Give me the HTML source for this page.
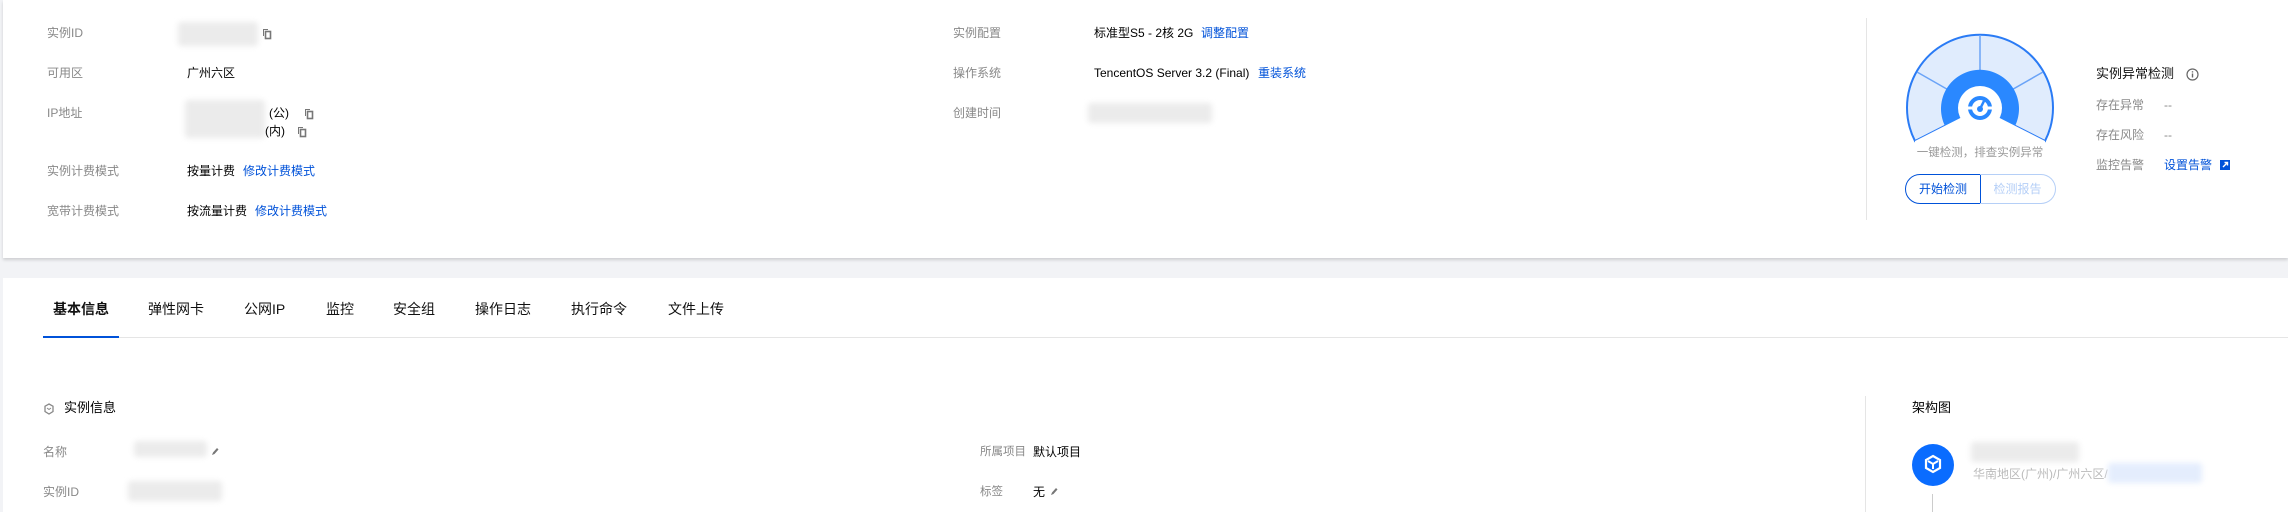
<!DOCTYPE html>
<html><head><meta charset="utf-8"><style>
*{margin:0;padding:0;box-sizing:border-box}
body{width:2288px;height:512px;overflow:hidden;background:#f2f3f6;font-family:"Liberation Sans","Noto Sans CJK SC",sans-serif;font-size:12px;color:#000;position:relative}
.a{position:absolute;white-space:nowrap;line-height:16px}
.card{position:absolute;background:#fff}
.l{color:#888}
.b{color:#0052d9}
.blur{position:absolute;background:#ebebeb;filter:blur(3px);border-radius:3px}
.tab{position:absolute;top:300px;font-size:14px;color:#111;line-height:18px}
</style></head><body>
<div class="card" style="left:3px;top:0;width:2285px;height:258px;box-shadow:0 2px 3px rgba(0,0,0,.15)"></div>
<div class="card" style="left:3px;top:278px;width:2285px;height:234px"></div>

<!-- col1 -->
<div class="a l" style="left:47px;top:25px">实例ID</div>
<div class="blur" style="left:178px;top:22px;width:80px;height:24px"></div>
<svg class="a" style="left:262px;top:28px" width="10" height="12" viewBox="0 0 10 12"><path d="M1 1h5v1H2v6H1z" fill="#777"/><rect x="3.5" y="3.5" width="5" height="7" fill="none" stroke="#777" stroke-width="1.6"/></svg>
<div class="a l" style="left:47px;top:65px">可用区</div>
<div class="a" style="left:187px;top:65px">广州六区</div>
<div class="a l" style="left:47px;top:105px">IP地址</div>
<div class="blur" style="left:185px;top:100px;width:80px;height:38px"></div>
<div class="a" style="left:269px;top:105px">(公)</div>
<svg class="a" style="left:304px;top:108px" width="10" height="12" viewBox="0 0 10 12"><path d="M1 1h5v1H2v6H1z" fill="#777"/><rect x="3.5" y="3.5" width="5" height="7" fill="none" stroke="#777" stroke-width="1.6"/></svg>
<div class="a" style="left:265px;top:123px">(内)</div>
<svg class="a" style="left:297px;top:126px" width="10" height="12" viewBox="0 0 10 12"><path d="M1 1h5v1H2v6H1z" fill="#777"/><rect x="3.5" y="3.5" width="5" height="7" fill="none" stroke="#777" stroke-width="1.6"/></svg>
<div class="a l" style="left:47px;top:163px">实例计费模式</div>
<div class="a" style="left:187px;top:163px">按量计费</div><div class="a b" style="left:243px;top:163px">修改计费模式</div>
<div class="a l" style="left:47px;top:203px">宽带计费模式</div>
<div class="a" style="left:187px;top:203px">按流量计费</div><div class="a b" style="left:255px;top:203px">修改计费模式</div>

<!-- col2 -->
<div class="a l" style="left:953px;top:25px">实例配置</div>
<div class="a" style="left:1094px;top:25px">标准型S5 - 2核 2G</div><div class="a b" style="left:1201px;top:25px">调整配置</div>
<div class="a l" style="left:953px;top:65px">操作系统</div>
<div class="a" style="left:1094px;top:65px">TencentOS Server 3.2 (Final)</div><div class="a b" style="left:1258px;top:65px">重装系统</div>
<div class="a l" style="left:953px;top:105px">创建时间</div>
<div class="blur" style="left:1088px;top:103px;width:124px;height:20px"></div>

<!-- right panel -->
<div style="position:absolute;left:1866px;top:18px;width:1px;height:202px;background:#e5e5e5"></div>
<svg class="a" style="left:1900px;top:30px" width="160" height="120" viewBox="1900 30 160 120">
<path d="M1980 108 L1915 141 A73 73 0 1 1 2045 141 Z" fill="#e0ecfd" stroke="#2a7bf5" stroke-width="2"/>
<path d="M1980 35V108M1917 72L1980 108M2043 72L1980 108" stroke="#6aa3f7" stroke-width="1.5"/>
<path d="M1980 108 L1945 126 A39 39 0 1 1 2015 126 Z" fill="#2a88ff"/>
<path d="M1915 141L1980 108L2045 141L2045 150L1915 150Z" fill="#fff"/>
<circle cx="1980" cy="108" r="22" fill="#fff"/>
<path d="M1970 108a10 10 0 1 1 20 0a10 10 0 0 1-20 0" fill="none" stroke="#2a88ff" stroke-width="4"/>
<path d="M1967 108h6M1987 108h6" stroke="#fff" stroke-width="3"/>
<circle cx="1980" cy="109" r="3" fill="#2a88ff"/><path d="M1980 109L1984 101" stroke="#2a88ff" stroke-width="2.5"/>
</svg>
<div class="a" style="left:1914px;top:145px;width:132px;text-align:center;color:#999;font-size:11.5px">一键检测，排查实例异常</div>
<div class="a" style="left:1905px;top:174px;width:76px;height:30px;border:1px solid #0052d9;border-radius:15px 0 0 15px;color:#0052d9;text-align:center;line-height:28px">开始检测</div>
<div class="a" style="left:1980px;top:174px;width:76px;height:30px;border:1px solid #b5cff7;border-left:none;border-radius:0 15px 15px 0;color:#b5cff7;text-align:center;line-height:28px">检测报告</div>
<div class="a" style="left:2096px;top:66px;font-size:13px;color:#111">实例异常检测</div>
<svg class="a" style="left:2186px;top:68px" width="13" height="13" viewBox="0 0 13 13"><circle cx="6.5" cy="6.5" r="5.5" fill="none" stroke="#666" stroke-width="1.2"/><path d="M6.5 5.5v4M6.5 3.3v1.2" stroke="#666" stroke-width="1.4"/></svg>
<div class="a l" style="left:2096px;top:97px">存在异常</div><div class="a l" style="left:2164px;top:97px">--</div>
<div class="a l" style="left:2096px;top:127px">存在风险</div><div class="a l" style="left:2164px;top:127px">--</div>
<div class="a l" style="left:2096px;top:157px">监控告警</div><div class="a b" style="left:2164px;top:157px">设置告警</div>
<svg class="a" style="left:2220px;top:160px" width="10" height="10" viewBox="0 0 10 10"><rect width="10" height="10" fill="#0052d9"/><path d="M3 7L7.5 2.5M4.5 2.5H7.5V5.5" stroke="#fff" stroke-width="1.4" fill="none"/></svg>

<!-- tabs -->
<div class="tab" style="left:53px;font-weight:bold">基本信息</div>
<div class="tab" style="left:148px">弹性网卡</div>
<div class="tab" style="left:244px">公网IP</div>
<div class="tab" style="left:326px">监控</div>
<div class="tab" style="left:393px">安全组</div>
<div class="tab" style="left:475px">操作日志</div>
<div class="tab" style="left:571px">执行命令</div>
<div class="tab" style="left:668px">文件上传</div>
<div style="position:absolute;left:43px;top:337px;width:2245px;height:1px;background:#e5e5e5"></div>
<div style="position:absolute;left:43px;top:336px;width:76px;height:2px;background:#0052d9"></div>

<!-- section -->
<svg class="a" style="left:44px;top:403px" width="10" height="12" viewBox="0 0 10 12"><path d="M5 1L9 3.2V8.5L5 11L1 8.5V3.2Z" fill="none" stroke="#888" stroke-width="1.3"/><path d="M3 5l2 1.5L7 5" stroke="#888" fill="none"/></svg>
<div class="a" style="left:64px;top:400px;font-size:13px">实例信息</div>
<div class="a l" style="left:43px;top:444px">名称</div>
<div class="blur" style="left:134px;top:441px;width:73px;height:16px"></div>
<svg class="a" style="left:211px;top:447px" width="8" height="9" viewBox="0 0 8 9"><path d="M1 8L2 5.5L6 1L7.5 2.5L3.5 7Z" fill="#777"/></svg>
<div class="a l" style="left:43px;top:484px">实例ID</div>
<div class="blur" style="left:128px;top:481px;width:94px;height:20px"></div>

<div class="a l" style="left:980px;top:444px;font-size:11.5px">所属项目</div>
<div class="a" style="left:1033px;top:444px">默认项目</div>
<div class="a l" style="left:980px;top:484px;font-size:11.5px">标签</div>
<div class="a" style="left:1033px;top:484px">无</div>
<svg class="a" style="left:1050px;top:487px" width="8" height="9" viewBox="0 0 8 9"><path d="M1 8L2 5.5L6 1L7.5 2.5L3.5 7Z" fill="#777"/></svg>

<div style="position:absolute;left:1865px;top:396px;width:1px;height:116px;background:#e5e5e5"></div>
<div class="a" style="left:1912px;top:400px;font-size:13px">架构图</div>
<svg class="a" style="left:1912px;top:444px" width="42" height="42" viewBox="0 0 42 42"><circle cx="21" cy="21" r="21" fill="#0a6cff"/><path d="M21 12L28 16V24L21 28L14 24V16Z" fill="none" stroke="#fff" stroke-width="2.2"/><path d="M16 17L21 20L26 17M21 20V25" stroke="#fff" stroke-width="2" fill="none"/></svg>
<div class="blur" style="left:1971px;top:442px;width:108px;height:20px"></div>
<div class="a" style="left:1973px;top:466px;color:#bbb">华南地区(广州)/广州六区/</div>
<div class="blur" style="left:2108px;top:463px;width:94px;height:20px;background:#e4edfd"></div>
<div style="position:absolute;left:1932px;top:494px;width:1px;height:18px;background:#ccc"></div>
</body></html>
